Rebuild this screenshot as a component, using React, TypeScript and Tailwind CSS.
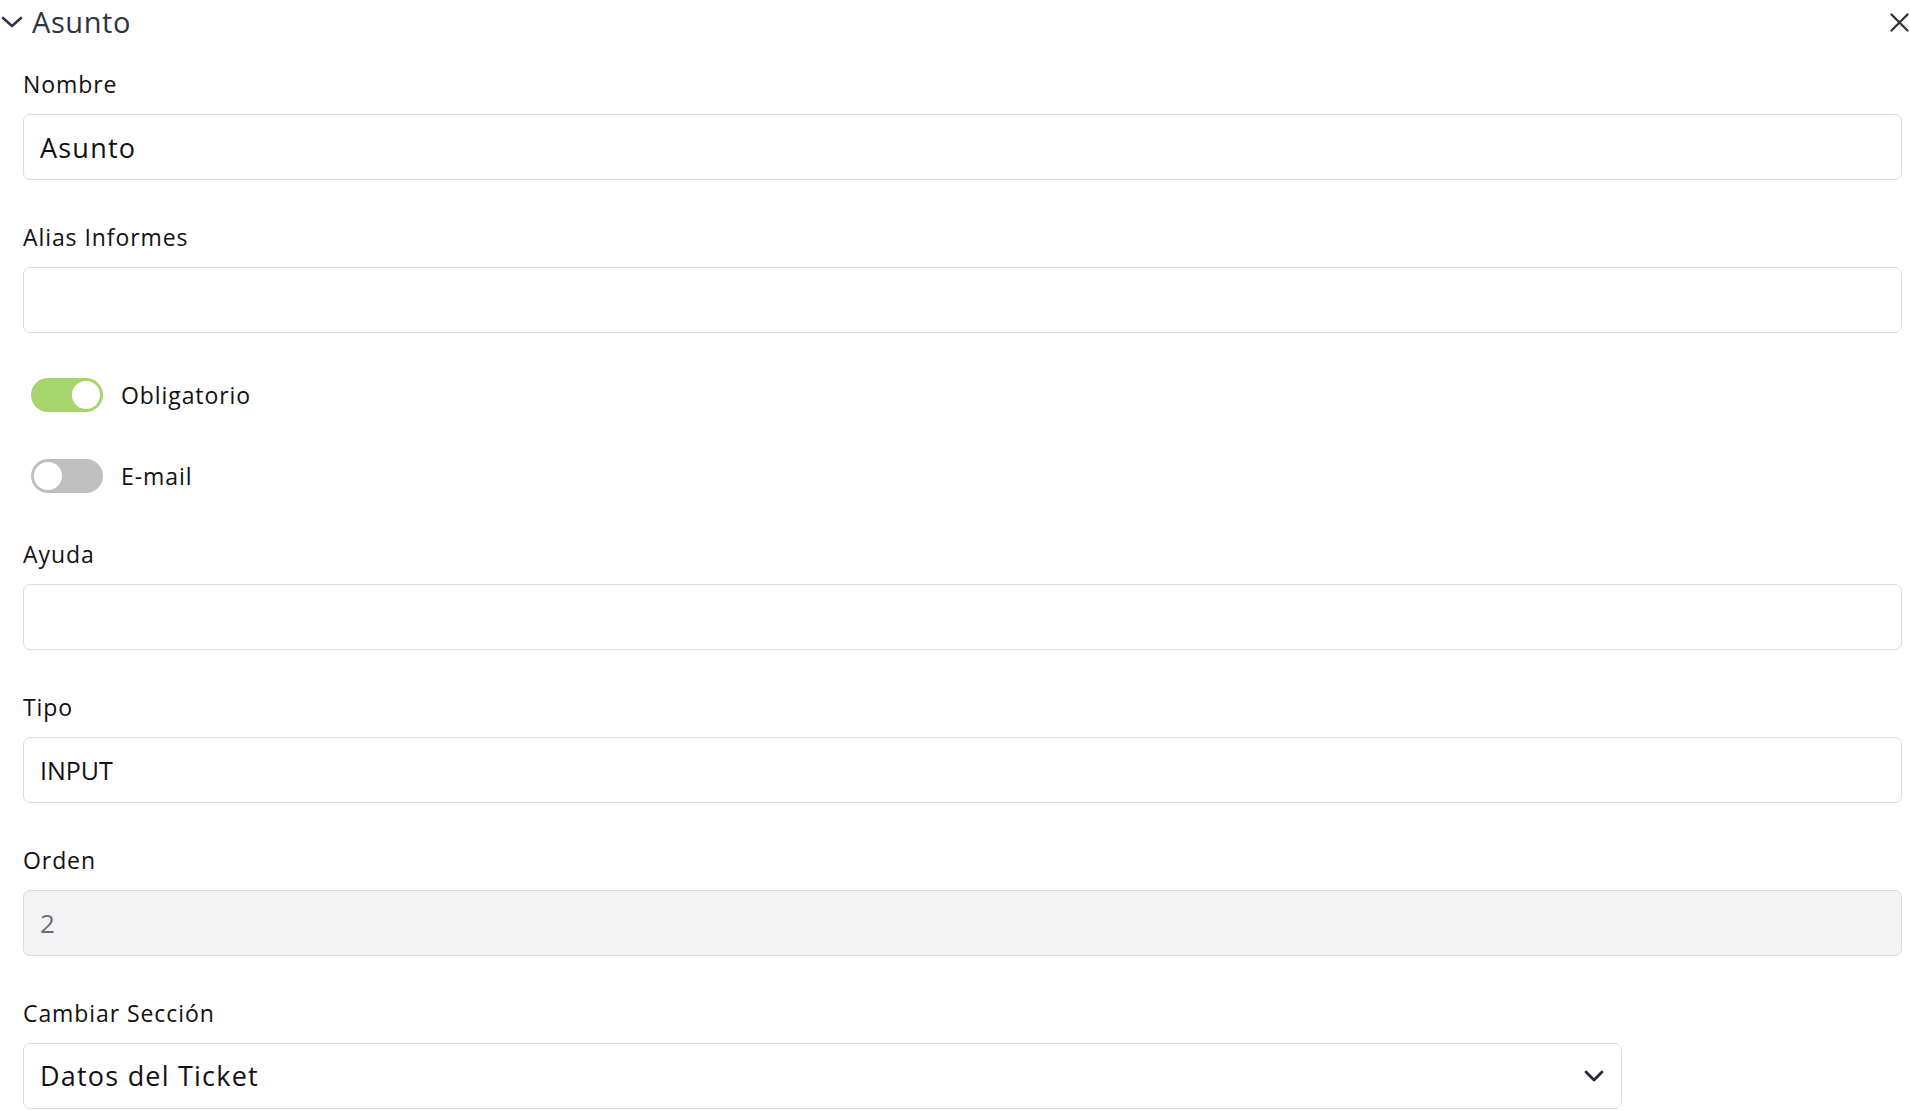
import { useState } from 'react'

const font = { fontFamily: '"Open Sans", "Noto Sans", sans-serif' }

function Label({ children }: { children: React.ReactNode }) {
  return (
    <label className="block text-[23px] leading-[30px] tracking-[0.04em] text-[#111111] mb-[15px]">{children}</label>
  )
}

function Toggle({ on, onChange, label }: { on: boolean; onChange: () => void; label: string }) {
  return (
    <div className="flex items-center h-[34px] pl-[8px]">
      <button
        onClick={onChange}
        className={`w-[72px] h-[34px] rounded-full p-[3px] flex transition-colors ${
          on ? 'bg-[#a6d56c] justify-end' : 'bg-[#bfbfbf] justify-start'
        }`}
      >
        <span className="block w-[28px] h-[28px] rounded-full bg-white" />
      </button>
      <span className="ml-[18px] text-[23px] leading-[30px] tracking-[0.04em] text-[#111111]">{label}</span>
    </div>
  )
}

export default function App() {
  const [nombre, setNombre] = useState('Asunto')
  const [alias, setAlias] = useState('')
  const [ayuda, setAyuda] = useState('')
  const [tipo, setTipo] = useState('INPUT')
  const [obligatorio, setObligatorio] = useState(true)
  const [email, setEmail] = useState(false)
  const [seccion, setSeccion] = useState('Datos del Ticket')

  const inputClass =
    'w-full h-[66px] rounded-[7px] border border-[#d6dede] bg-white px-[16px] text-[27px] tracking-[0.045em] text-[#111111] outline-none focus:border-[#a6d56c]'

  return (
    <div className="min-h-screen w-full bg-white" style={font}>
      {/* Header */}
      <div className="flex items-center justify-between h-[44px] pr-[1px]">
        <div className="flex items-center">
          <svg width="22" height="12" viewBox="0 0 22 12" className="ml-[1px]">
            <polyline points="2,2 11,10 20,2" fill="none" stroke="#2d3644" strokeWidth="2.6" strokeLinecap="round" strokeLinejoin="round" />
          </svg>
          <span className="ml-[9px] text-[29px] leading-[40px] tracking-[0.02em] text-[#2b3442]">Asunto</span>
        </div>
        <button className="w-[20px] h-[20px] flex items-center justify-center">
          <svg width="19" height="19" viewBox="0 0 19 19">
            <path d="M1.5 1.5 L17.5 17.5 M17.5 1.5 L1.5 17.5" stroke="#333333" strokeWidth="2.3" strokeLinecap="round" />
          </svg>
        </button>
      </div>

      {/* Form */}
      <div className="pl-[23px] pr-[8px] pt-[25px]">
        <Label>Nombre</Label>
        <input className={inputClass} style={font} value={nombre} onChange={(e) => setNombre(e.target.value)} />

        <div className="mt-[42px]">
          <Label>Alias Informes</Label>
          <input className={inputClass} style={font} value={alias} onChange={(e) => setAlias(e.target.value)} />
        </div>

        <div className="mt-[45px]">
          <Toggle on={obligatorio} onChange={() => setObligatorio(!obligatorio)} label="Obligatorio" />
        </div>
        <div className="mt-[47px]">
          <Toggle on={email} onChange={() => setEmail(!email)} label="E-mail" />
        </div>

        <div className="mt-[46px]">
          <Label>Ayuda</Label>
          <input className={inputClass} style={font} value={ayuda} onChange={(e) => setAyuda(e.target.value)} />
        </div>

        <div className="mt-[42px]">
          <Label>Tipo</Label>
          <input
            className="w-full h-[66px] rounded-[7px] border border-[#d6dede] bg-white px-[16px] text-[25px] text-[#111111] outline-none focus:border-[#a6d56c]"
            style={font}
            value={tipo}
            onChange={(e) => setTipo(e.target.value)}
          />
        </div>

        <div className="mt-[42px]">
          <Label>Orden</Label>
          <input
            className="w-full h-[66px] rounded-[7px] border border-[#d6dede] bg-[#f3f3f3] px-[16px] text-[26px] text-[#6b6e7a] outline-none"
            style={font}
            value="2"
            disabled
            readOnly
          />
        </div>

        <div className="mt-[42px]">
          <Label>Cambiar Sección</Label>
          <div className="relative w-[1599px]">
            <select
              className="w-full h-[66px] appearance-none rounded-[7px] border border-[#d6dede] bg-white pl-[16px] pr-[50px] text-[27px] tracking-[0.045em] text-[#111111] outline-none"
              style={font}
              value={seccion}
              onChange={(e) => setSeccion(e.target.value)}
            >
              <option>Datos del Ticket</option>
              <option>Datos del Cliente</option>
              <option>Otros</option>
            </select>
            <svg
              width="20"
              height="12"
              viewBox="0 0 20 12"
              className="pointer-events-none absolute right-[18px] top-1/2 -translate-y-1/2"
            >
              <polyline points="2,2 10,10 18,2" fill="none" stroke="#1f2937" strokeWidth="2.8" strokeLinecap="round" strokeLinejoin="round" />
            </svg>
          </div>
        </div>
      </div>
    </div>
  )
}
